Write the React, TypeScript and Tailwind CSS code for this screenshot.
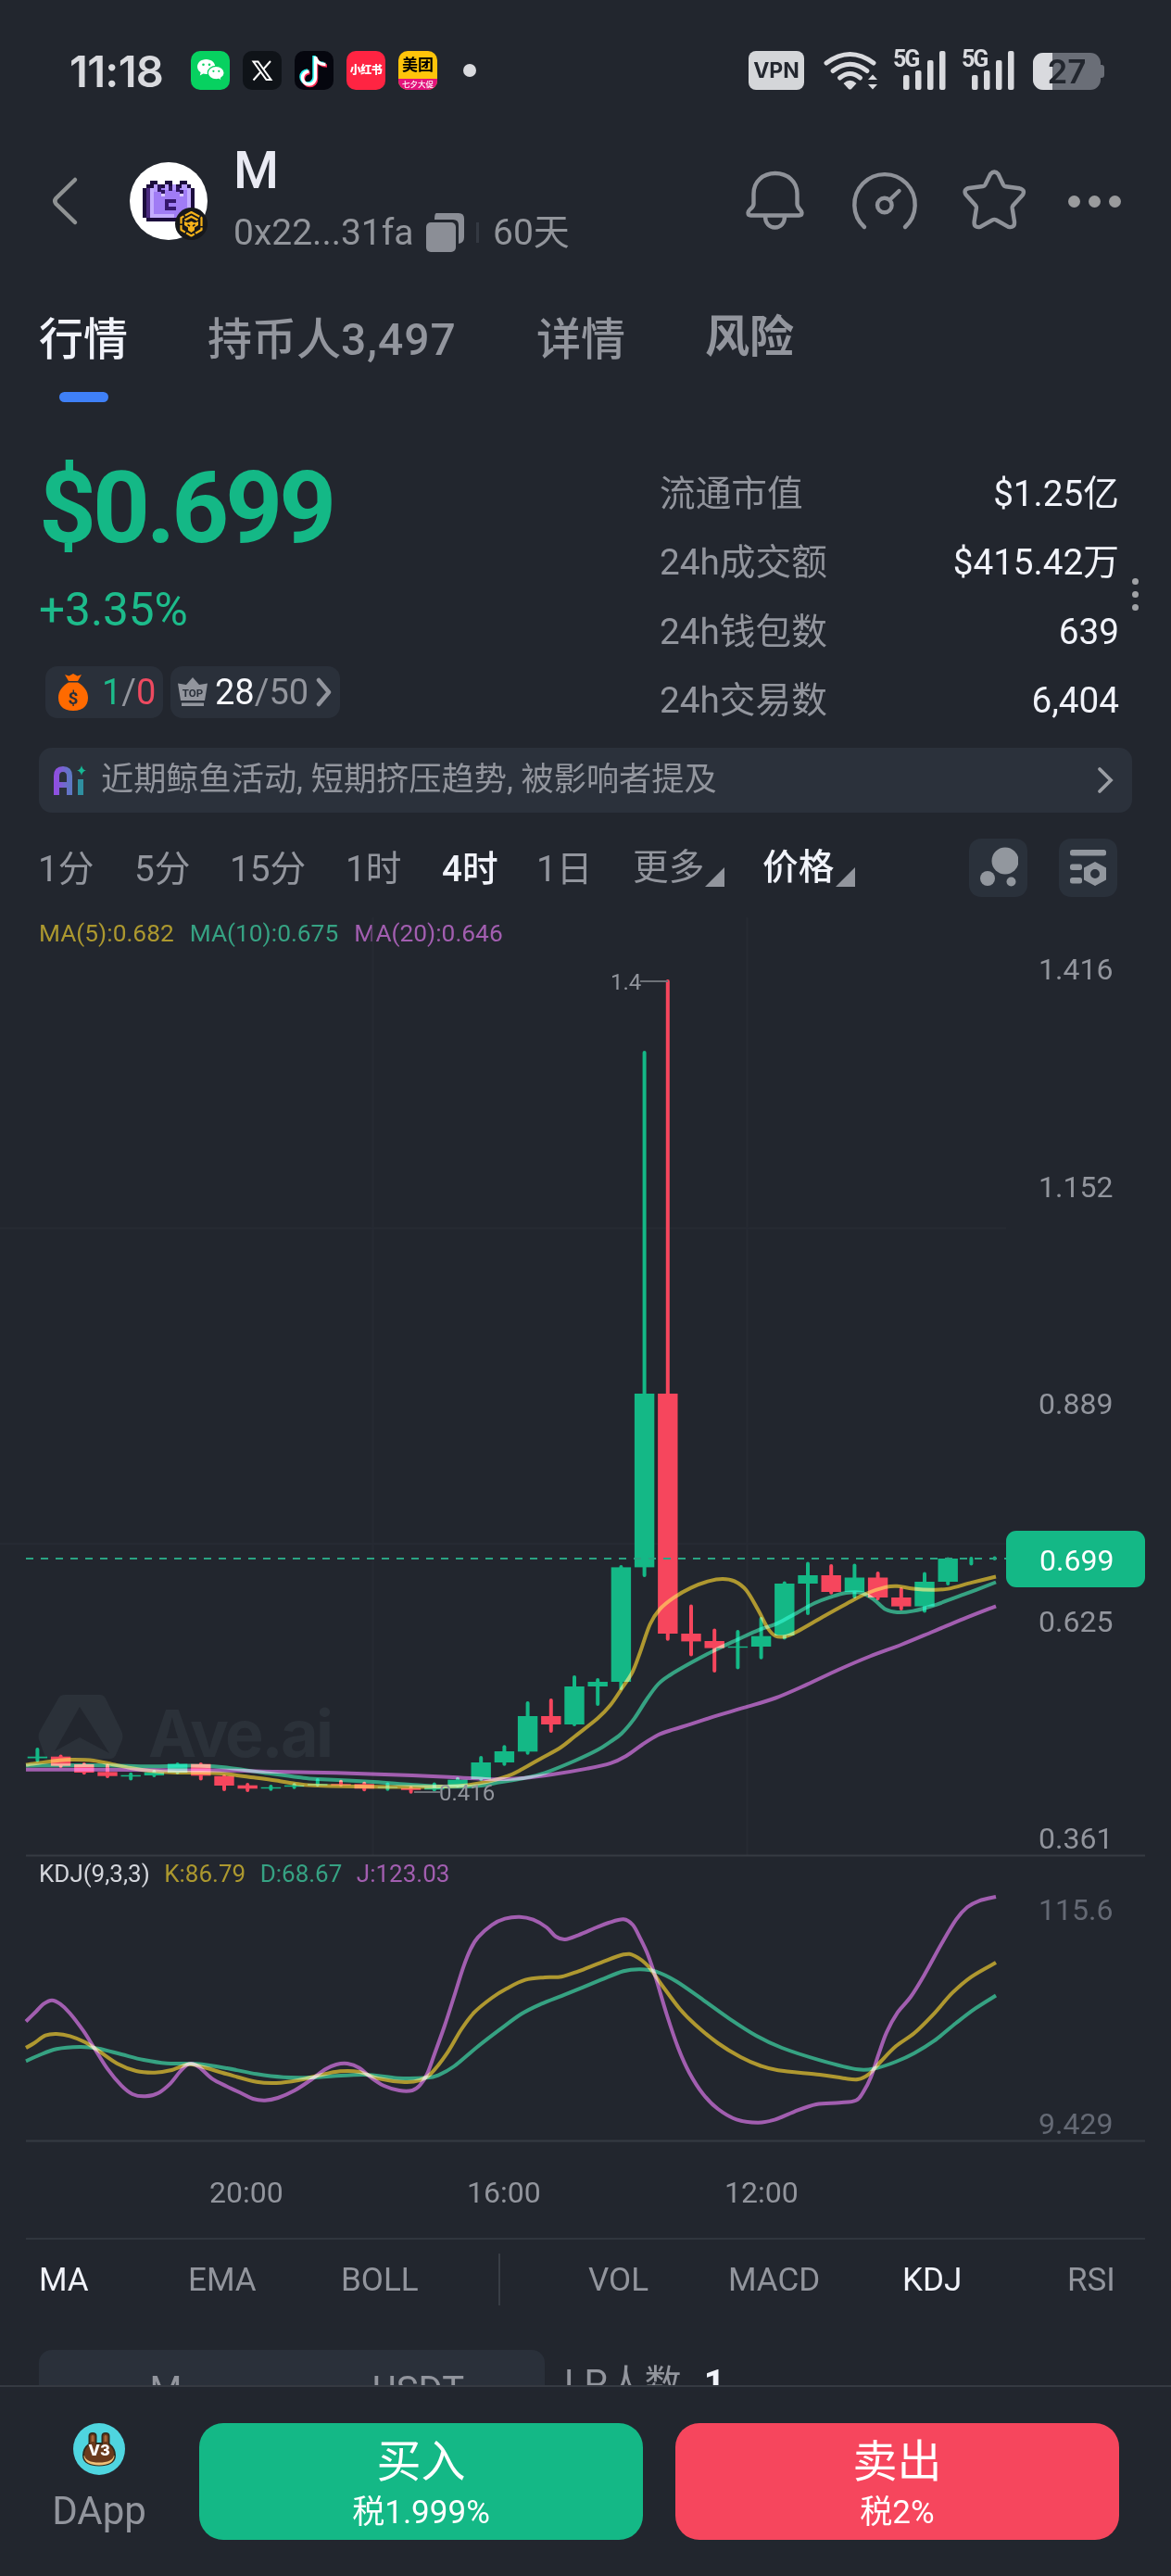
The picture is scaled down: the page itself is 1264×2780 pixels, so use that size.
import clsx from "clsx";

type Point = [number, number];

const UP = "#14b886";
const DOWN = "#f6465d";

// body top, body bottom, wick top, wick bottom, 1 = up / 0 = down
const candles: [number, number, number, number, number][] = [
  [1895.7, 1897.5, 1886, 1901.7, 1],
  [1895.7, 1905.7, 1893.5, 1908, 0],
  [1904, 1913, 1902, 1915.3, 0],
  [1912.3, 1916.7, 1903.5, 1919, 0],
  [1915.7, 1917.2, 1912.7, 1921.5, 1],
  [1912.7, 1916, 1910, 1918, 1],
  [1903.5, 1913, 1902, 1914.7, 1],
  [1903.7, 1916.3, 1902, 1921.5, 0],
  [1916.7, 1927, 1915, 1933, 0],
  [1926.7, 1930.3, 1924, 1934, 0],
  [1928.8, 1930.2, 1926, 1932.7, 1],
  [1926.7, 1928.2, 1924.3, 1930.7, 1],
  [1925.3, 1926.7, 1919, 1928, 1],
  [1925.3, 1926.7, 1920.7, 1928, 0],
  [1925.3, 1930.3, 1922.7, 1933.3, 0],
  [1928.5, 1929.5, 1923.5, 1932.7, 1],
  [1929.8, 1931.7, 1927.5, 1935.7, 0],
  [1929.3, 1931.3, 1923.5, 1933.5, 1],
  [1920.7, 1928, 1917.7, 1929, 1],
  [1902, 1920, 1895, 1922, 1],
  [1890, 1902, 1883.3, 1905.7, 1],
  [1852, 1890.3, 1836, 1893.7, 1],
  [1852, 1861, 1833, 1870, 0],
  [1820, 1861, 1808, 1863, 1],
  [1815, 1820, 1811, 1841, 1],
  [1691.4, 1815, 1689, 1824, 1],
  [1504, 1691.4, 1134, 1702, 1],
  [1504, 1763, 1057, 1770.7, 0],
  [1763, 1771.4, 1731.4, 1787.5, 0],
  [1771, 1778.6, 1757.5, 1805, 0],
  [1776.8, 1778.2, 1759, 1801.4, 1],
  [1765.7, 1777, 1745, 1790.7, 1],
  [1709, 1765, 1706.4, 1769.6, 1],
  [1700, 1709, 1685.4, 1743, 1],
  [1700, 1718, 1688, 1720.7, 0],
  [1702.5, 1718, 1687.5, 1725, 1],
  [1702.5, 1724, 1696, 1727, 0],
  [1724, 1733.6, 1713, 1738, 0],
  [1707, 1733.6, 1696.4, 1740.4, 1],
  [1682, 1707, 1680.4, 1711, 1],
  [0, 0, 1680, 1689.6, 1],
  [0, 0, 1679.5, 1684, 1],
];

const ma5: Point[] = [
  [28, 1904.5], [64, 1899.7], [80, 1899], [101, 1900], [121, 1904], [141, 1908], [161, 1911], [191, 1913],
  [218, 1913], [242, 1914.3], [274, 1918.3], [298, 1921.5], [322, 1925.3], [343, 1927], [403, 1928.3],
  [468, 1928.3], [500, 1927], [524, 1923.3], [548, 1916.7], [564, 1909], [584, 1897.7], [605, 1886],
  [621, 1873.5], [645, 1854.6], [659, 1840], [671, 1822.5], [682.6, 1804.6], [691, 1783], [701.6, 1753],
  [712, 1736.8], [727, 1724.3], [745.7, 1713.6], [765, 1706.4], [780, 1704], [792.7, 1706.4],
  [805.4, 1716], [818, 1736.8], [828.7, 1757], [837, 1765.5], [847.8, 1766], [860.5, 1760.7], [888, 1745],
  [913.4, 1731], [934.6, 1720], [955.8, 1712.9], [968.5, 1711.8], [985.4, 1714.5], [1006.6, 1715.7],
  [1023.5, 1714.6], [1049, 1707.9], [1075, 1701.5],
];

const ma10: Point[] = [
  [28, 1905.5], [100, 1905], [161, 1906.3], [191, 1905.7], [218, 1905.7], [242, 1907.3], [282, 1912.7],
  [322, 1918], [343, 1920], [403, 1923], [443, 1926], [484, 1928.3], [516, 1927.3], [540, 1923.3],
  [564, 1919.3], [588, 1913.3], [621, 1900], [645, 1888.6], [659, 1879.6], [671, 1870.7], [684.7, 1854.6],
  [697.4, 1835], [710, 1818], [722.8, 1808], [745.7, 1794.6], [769.4, 1782], [794.8, 1770], [820, 1758.6],
  [837, 1752.9], [854, 1744], [879.5, 1730], [896.5, 1723.6], [913.4, 1719], [930, 1719], [943, 1726],
  [955.8, 1736.8], [968.5, 1740], [985.4, 1738.6], [1006.6, 1733], [1040.5, 1720.7], [1075, 1707.5],
];

const ma20: Point[] = [
  [28, 1909.7], [100, 1909.7], [191, 1910.5], [250, 1910.7], [298, 1912], [363, 1913.3], [423, 1915.3],
  [484, 1917.7], [524, 1920], [544, 1920], [564, 1919], [596, 1915], [634, 1908.6], [659, 1902.9],
  [676, 1895], [693, 1883], [710, 1872.5], [727, 1866.4], [745.7, 1860.7], [769.4, 1852.9], [803, 1842.9],
  [837, 1832.5], [871, 1817.9], [905, 1802], [939, 1787.5], [972.7, 1775], [1006.6, 1761],
  [1040.5, 1746.8], [1075, 1733.3],
];

const kLine: Point[] = [
  [28, 2210], [36.7, 2205], [49, 2196.7], [61, 2195], [75.5, 2197.3], [92, 2204], [106, 2213], [126.5, 2227],
  [147, 2235], [167, 2236.7], [184, 2234.3], [204, 2227.7], [220, 2231], [245, 2238.3], [277, 2246.7],
  [298, 2248], [322, 2245], [343, 2240], [367, 2235.3], [388, 2236], [408, 2243], [437, 2247],
  [453, 2245], [465, 2238], [482, 2216.7], [498, 2190], [512, 2171.7], [531, 2156], [547, 2146],
  [567, 2136.7], [588, 2134], [606, 2133.3], [624.5, 2127.3], [648.5, 2118], [673, 2109.3], [685, 2110.7],
  [699.5, 2121.7], [714, 2141.7], [734, 2168.3], [750.5, 2185], [775, 2205], [799.5, 2220], [820, 2229],
  [840, 2234.3], [885, 2239], [910, 2242.7], [926, 2244], [938, 2238.3], [950.5, 2225], [967, 2208.3],
  [987, 2194], [1008, 2173.3], [1028, 2150.7], [1048.5, 2133.3], [1075, 2118],
];

const dLine: Point[] = [
  [28, 2224.3], [41, 2218.5], [61, 2211.3], [86, 2209], [106, 2210.7], [131, 2217], [155, 2223],
  [180, 2226.7], [212, 2227.3], [245, 2232], [277, 2238.3], [306, 2241.7], [335, 2242], [392, 2239],
  [429, 2242.7], [461, 2242.3], [473.5, 2239.3], [490, 2230], [514, 2210], [539, 2190.7], [563, 2173.3],
  [584, 2162.7], [612, 2151.7], [648.5, 2136.7], [673, 2127.3], [691, 2125.3], [708, 2127.7],
  [730, 2138.3], [759, 2158.3], [787, 2178.3], [816, 2196.7], [844, 2210], [885, 2223.3], [926, 2233.3],
  [946.5, 2231.7], [967, 2225], [987, 2215.7], [1008, 2202.7], [1032, 2183.3], [1052.6, 2167.7],
  [1075, 2153.5],
];

const jLine: Point[] = [
  [28, 2181.5], [39, 2170.7], [47, 2162.7], [56, 2158.7], [65, 2162.7], [75.5, 2172.7], [90, 2191.7],
  [102, 2210.7], [116, 2232.7], [131, 2250.7], [143, 2260], [157, 2262.3], [171, 2258.7], [184, 2248.3],
  [194, 2236], [202, 2228.3], [208, 2227.3], [216, 2231.7], [229, 2243.3], [245, 2251.7], [261, 2259.3],
  [273, 2265], [286, 2266.7], [300, 2264], [318, 2256], [335, 2245], [351, 2233.3], [363, 2228],
  [375, 2227], [388, 2231.7], [400, 2241.7], [414, 2250.7], [431, 2256], [445, 2256], [453, 2250.7],
  [461, 2238.3], [469, 2216.7], [480, 2186], [490, 2155], [500, 2123.3], [508, 2103.3], [516, 2090.7],
  [531, 2077.3], [545, 2070.7], [561, 2068.7], [575.5, 2071.7], [590, 2080], [600, 2090], [610, 2093],
  [624.5, 2088.3], [644, 2080], [657, 2075], [673, 2071.3], [683, 2077.3], [691, 2091.7], [699.5, 2110],
  [708, 2135], [720, 2175], [732, 2210], [744, 2236.7], [759, 2260], [775, 2276], [795, 2287.3],
  [818, 2290.7], [836, 2287.7], [857, 2279], [881, 2271], [906, 2269.3], [924, 2266.7], [932, 2257.3],
  [940, 2241.7], [948.5, 2216.7], [957, 2193.3], [969, 2171.7], [983, 2155], [997.5, 2131.7],
  [1016, 2098.3], [1032, 2071.7], [1044, 2058.3], [1057, 2051.3], [1075, 2047],
];

const smooth = (pts: Point[]) => {
  let d = `M${pts[0][0]} ${pts[0][1]}`;
  for (let i = 0; i < pts.length - 1; i++) {
    const p0 = pts[i - 1] ?? pts[i];
    const p1 = pts[i];
    const p2 = pts[i + 1];
    const p3 = pts[i + 2] ?? p2;
    d += `C${p1[0] + (p2[0] - p0[0]) / 6} ${p1[1] + (p2[1] - p0[1]) / 6} ${p2[0] - (p3[0] - p1[0]) / 6} ${p2[1] - (p3[1] - p1[1]) / 6} ${p2[0]} ${p2[1]}`;
  }
  return d;
};

const Line = ({ pts, color }: { pts: Point[]; color: string }) => (
  <path d={smooth(pts)} stroke={color} strokeWidth={4} fill="none" className="mix-blend-screen" />
);

export default function App() {
  return (
    <div className="flex h-[2780px] w-[1264px] flex-col overflow-hidden bg-[#22262e] font-['Roboto','Noto_Sans_CJK_SC',sans-serif] text-[#92959d]">
      <StatusBar />
      <Header />
      <Tabs />
      <PriceSection />
      <AiBanner />
      <Timeframes />
      <Chart />
      <Indicators />
      <PairPeek />
      <BottomBar />
    </div>
  );
}

const Signal = () => (
  <div className="relative h-[44px] w-[58px]">
    <svg width="58" height="44" viewBox="0 0 58 44" fill="#d9dade">
      <rect x="11" y="27" width="6.5" height="16" rx="2" />
      <rect x="24" y="22" width="6.5" height="21" rx="2" />
      <rect x="37" y="11" width="6.5" height="32" rx="2" />
      <rect x="50" y="1" width="6.5" height="42" rx="2" />
    </svg>
    <span className="absolute -top-[5px] left-0 text-[25px] font-bold leading-[30px] tracking-[-2px]">5G</span>
  </div>
);

const StatusBar = () => (
  <div className="flex h-[152px] shrink-0 items-center pl-[75px] text-[#d9dade]">
    <span className="w-[131px] font-['Inter'] text-[47px] font-semibold leading-none tracking-[-0.7px]">
      11:18
    </span>
    <div className="flex gap-[14px]">
      {/* WeChat */}
      <svg width="42" height="42" viewBox="0 0 42 42">
        <rect width="42" height="42" rx="10" fill="#07d160" />
        <path d="M16.5 9C11 9 7 12.6 7 17c0 2.600 1.400 4.700 3.600 6.100l-.8 3.300 3.500-1.900c1 .3 2.100.4 3.200.4 5.500 0 9.800-3.500 9.800-7.900S22 9 16.500 9z" fill="#fff" />
        <path d="M27.300 16.300c-5 0-9 3.300-9 7.300s4 7.200 9 7.200c1 0 2-.1 2.900-.4l3 1.800-.7-2.900c2.300-1.400 3.600-3.400 3.600-5.700 0-4-4-7.300-8.800-7.300z" fill="#fff" stroke="#07d160" strokeWidth="1.200" />
        <g fill="#07d160">
          <circle cx="13.500" cy="14.800" r="1.300" />
          <circle cx="20" cy="14.800" r="1.300" />
          <circle cx="24.400" cy="21.800" r="1.100" />
          <circle cx="30.300" cy="21.800" r="1.100" />
        </g>
      </svg>
      {/* X */}
      <svg width="42" height="42" viewBox="0 0 42 42">
        <rect width="42" height="42" rx="10" fill="#0f1318" />
        <path d="M11.500 11.500h5l14 19.500h-5z" fill="none" stroke="#fff" strokeWidth="2" />
        <path d="M30 11 22 20M19 23l-7.500 8.500" stroke="#fff" strokeWidth="2" />
      </svg>
      {/* Douyin */}
      <svg width="42" height="42" viewBox="0 0 42 42" fill="none" strokeWidth="3.500">
        <rect width="42" height="42" rx="10" fill="#05060e" />
        <path d="M22 5.500v23a7 7 0 1 1-7-7M22 6c1 5.500 5 8 10.500 8" transform="translate(-1 -.5)" stroke="#25f4ee" />
        <path d="M22 6.500v23a7 7 0 1 1-7-7M22 7c1 5.500 6 8 11.500 8" transform="translate(1.500 1)" stroke="#fe2c55" />
        <path d="M22.500 6v23a7 7 0 1 1-7-7M22.500 6.500c1 5.500 5 8 11 8" stroke="#fff" />
      </svg>
      <div className="flex h-[42px] w-[42px] items-center justify-center whitespace-nowrap rounded-[10px] bg-[#ff2442] text-[12px] font-black leading-none tracking-[-0.500px] text-white">
        小红书
      </div>
      <div className="flex h-[42px] w-[42px] flex-col items-center overflow-hidden whitespace-nowrap rounded-[10px] bg-[#ffc40a]">
        <span className="flex h-[30px] items-center text-[17px] font-bold leading-none text-black">美团</span>
        <span className="flex h-[12px] w-full items-center justify-center bg-[#e3137c] text-[8.500px] font-medium leading-none text-white">
          七夕大促
        </span>
      </div>
    </div>
    <div className="ml-[28px] h-[14px] w-[14px] rounded-full bg-[#d9dade]" />
    <div className="ml-[294px] flex h-[42px] w-[60px] items-center justify-center rounded-[8px] bg-[#d4d6d9] font-['Inter'] text-[23px] font-bold leading-none text-[#22262e]">
      VPN
    </div>
    <svg className="ml-[20px]" width="64" height="44" viewBox="888 54 64 44" fill="none">
      <g stroke="#d9dade" strokeWidth="5" strokeLinecap="round">
        <path d="M892 68q25.500-19 51 0" />
        <path d="M899 76.500q18.500-14.500 37 0" />
        <path d="M906.500 84q11-9 22 0" />
      </g>
      <path d="M910.500 90q7-6.500 14 0l-5.500 6q-1.500 1.200-3 0zM937 86l5-5.500 5 5.500zM937 91h10l-5 5.500z" fill="#d9dade" />
    </svg>
    <div className="ml-[12px] flex gap-[16px]">
      <Signal />
      <Signal />
    </div>
    <div className="relative ml-[19px] mt-[2px] flex h-[40px] w-[73px] items-center justify-center overflow-hidden rounded-[11px] bg-[#6a6e77]">
      <div className="absolute inset-y-0 left-0 w-[21px] bg-[#d9dade]" />
      <span className="relative font-['Inter'] text-[35px] font-semibold leading-none text-[#22262e]">27</span>
    </div>
    <div className="mt-[2px] h-[14px] w-[4px] rounded-r-[3px] bg-[#6a6e77]" />
  </div>
);

const Avatar = () => (
  <svg width="84" height="84" viewBox="0 0 84 84">
    <circle cx="42" cy="42" r="42" fill="#fff" />
    <g shapeRendering="crispEdges">
      <path d="M14 28h4v-4h4v-4h8v4h8v-4h8v4h8v-4h8v4h4v4h4v32h-4v4H18v-4h-4z" fill="#1c0d3d" />
      <path d="M18 28h4v32h-4z" fill="#4a2a80" />
      <path d="M22 28h44v32H22z" fill="#a07cf5" />
      <path d="M22 28h4v28h22v4H22zM62 28h4v24h-4z" fill="#c3acff" />
      <path d="M26 24h4v8h-4zM38 24h4v6h-4zM46 24h4v6h-4zM56 24h6v6h-6z" fill="#b69aff" />
      <path d="M30 24h4v8h-4zM34 30h4v4h-4zM42 26h4v5h-4zM50 26h4v6h-4zM54 30h4v4h-4z" fill="#2c145c" />
      <path d="M34 34h4v3h-4zM54 34h4v3h-4z" fill="#d9cbff" />
      <path d="M38 40h12v4h-8v4h8v4H38z" fill="#35176e" />
    </g>
    <circle cx="66.500" cy="66.500" r="17.500" fill="#17181b" />
    <g fill="none" stroke="#f5b21a" strokeWidth="2.200" strokeLinejoin="round">
      <path d="M66.500 54 77.500 60v13l-11 6.500-11-6.500V60z" strokeDasharray="10 1.500" />
      <path d="m59.500 62.500 7-3.800 7 3.800" />
    </g>
    <path d="m59 64 4 1.500 3.500-1.700L70 65.500l4-1.500v4l-4 2.500v3L66.500 76 63 73.500v-3L59 68z" fill="#f5b21a" />
    <path d="m62.500 67.500 2.500 1.500M70.500 67.500 68 69" stroke="#17181b" strokeWidth="1.500" />
  </svg>
);

const Header = () => (
  <div className="flex h-[130px] shrink-0 items-center pl-[54px] text-[#92959b]">
    <svg width="32" height="56" viewBox="0 0 32 56" fill="none">
      <path d="M27 5 6.500 25q-2.500 3 0 6L27 51" stroke="#8f9293" strokeWidth="4.500" strokeLinecap="round" />
    </svg>
    <div className="ml-[54px]">
      <Avatar />
    </div>
    <div className="ml-[28px] flex w-[552px] flex-col">
      <div className="flex h-[68px] items-center pt-[2px] text-[56px] font-medium leading-none text-[#e9eaf3]">M</div>
      <div className="flex h-[68px] items-center text-[39px] leading-none">
        <span className="w-[206px]">0x22...31fa</span>
        <svg width="44" height="44" viewBox="0 0 44 44">
          <path d="M13 1h24q6 0 6 6v20q0 6-6 7V14q0-6-6-6H11q0-7 2-7z" fill="#8b8e96" />
          <rect x="2" y="11" width="32" height="32" rx="5" fill="#8b8e96" />
        </svg>
        <div className="ml-[12px] h-[22px] w-[3px] bg-[#343942]" />
        <span className="ml-[15px]">60天</span>
      </div>
    </div>
    <svg width="66" height="68" viewBox="803 184 66 68" fill="none" stroke="#8f9299" strokeWidth="4.400">
      <path d="M806.500 230.500q0 3 3 3h52q3 0 3-3 0-1.500-2-3.500-3-3-3-6V210c0-13-10.500-22-23.700-22S812.500 197 812.500 210v11q0 3-4 6-2 2-2 3.500zM825 234.500c0 7 4 12 10.500 12s10.500-5 10.500-12" />
    </svg>
    <svg className="ml-[48px]" width="74" height="68" viewBox="917 184 74 68" fill="none" stroke="#8f9299" strokeWidth="4.400" strokeLinecap="round">
      <path d="M932 246a32.700 32.700 0 1 1 44 0M959.500 216.500l10-9.500" />
      <circle cx="953.800" cy="222.500" r="7.800" />
    </svg>
    <svg className="ml-[46px]" width="70" height="68" viewBox="1037 184 70 68" fill="none" stroke="#8f9299" strokeWidth="4.400" strokeLinejoin="round">
      <path d="M1068 189q4.300-5 8.600 0l5.400 11.500q.8 1.500 2.500 1.800l15 2q6.500 1.500 3.500 7l-10.500 11.500q-1 1.500-.8 3l2.300 14.500q.5 7-6.500 5.500l-13-7.300q-2.200-1.200-4.400 0l-13 7.300q-7 1.500-6.500-5.500l2.300-14.500q.2-1.500-.8-3L1041.500 211q-3-5.500 3.500-7l15-2q1.700-.3 2.500-1.800z" />
    </svg>
    <div className="ml-[45px] flex gap-[9px]">
      <i className="h-[13px] w-[13px] rounded-full bg-[#9a9b9d]" />
      <i className="h-[13px] w-[13px] rounded-full bg-[#9a9b9d]" />
      <i className="h-[13px] w-[13px] rounded-full bg-[#9a9b9d]" />
    </div>
  </div>
);

const Tabs = () => (
  <div className="flex h-[166px] shrink-0 items-center pl-[42px] pt-[4px] text-[48px] leading-none">
    <div className="relative w-[182px] font-medium text-[#f1f3fa]">
      行情
      <div className="absolute left-[22px] top-[80px] h-[11px] w-[53px] rounded-full bg-[#3f80f7]" />
    </div>
    <div className="w-[355px] font-medium">
      持币人<span className="tracking-[1px]">3,497</span>
    </div>
    <div className="w-[182px] font-medium">详情</div>
    <div className="-mt-[6px] font-bold">风险</div>
  </div>
);

const stats = [
  ["流通市值", "$1.25亿"],
  ["24h成交额", "$415.42万"],
  ["24h钱包数", "639"],
  ["24h交易数", "6,404"],
];

const PriceSection = () => (
  <div className="relative flex h-[359px] shrink-0 justify-between pl-[42px] pr-[56px] pt-[47px] leading-none">
    <div>
      <div className="flex h-[103px] items-center pt-[3px] text-[108px] font-bold tracking-[-4px] text-[#14b886]">
        $0.699
      </div>
      <div className="flex h-[121px] items-center text-[49.500px] text-[#1dbb8b]">+3.35%</div>
      <div className="flex gap-[8px] pl-[7px] text-[38px]">
        <div className="flex h-[56px] w-[127px] items-center rounded-[13px] bg-[#2a303a] pl-[14px]">
          <svg width="32" height="42" viewBox="0 0 32 42">
            <path d="m7 2 4.500 1.500L16 1l4.500 2.500L25 2l-4 7H11zM11 10.500h10C28 14.500 32 20 32 27c0 9-6 14-16 14S0 36 0 27c0-7 4-12.500 11-16.500z" fill="#ff6a00" />
            <text x="16" y="34" fontSize="19" fontWeight="700" textAnchor="middle" fill="#2a303a">$</text>
          </svg>
          <span className="ml-[15px]">
            <span className="text-[#1dbb8b]">1</span>/<span className="text-[#ee4a60]">0</span>
          </span>
        </div>
        <div className="flex h-[56px] w-[183px] items-center rounded-[13px] bg-[#2a303a] pl-[8px]">
          <svg width="32" height="32" viewBox="0 0 32 32" fill="#92959d">
            <path d="M0 6.500 9 8l7-8 7 8 9-1.500L29 25H3zM4 27.500h24V31H4z" />
            <text x="16" y="20.500" fontSize="11.500" fontWeight="700" textAnchor="middle" fill="#2a303a">TOP</text>
          </svg>
          <span className="ml-[8px]">
            <span className="text-[#f7f8fc]">28</span>/50
          </span>
          <svg className="ml-[8px]" width="18" height="32" viewBox="0 0 18 32" fill="none">
            <path d="m3 3 11 13L3 29" stroke="#92959d" strokeWidth="4.500" strokeLinecap="round" strokeLinejoin="round" />
          </svg>
        </div>
      </div>
    </div>
    <div className="w-[496px] pt-px text-[38.700px]">
      {stats.map(([label, value]) => (
        <div key={label} className="flex h-[74.400px] items-center justify-between">
          <span>{label}</span>
          <span className="text-[#f1f3fa]">{value}</span>
        </div>
      ))}
    </div>
    <div className="absolute right-[35px] top-[176px] flex flex-col gap-[7px]">
      <i className="h-[7px] w-[7px] rounded-full bg-[#a0a2a6]" />
      <i className="h-[7px] w-[7px] rounded-full bg-[#a0a2a6]" />
      <i className="h-[7px] w-[7px] rounded-full bg-[#a0a2a6]" />
    </div>
  </div>
);

const AiBanner = () => (
  <div className="mx-[42px] flex h-[70px] shrink-0 items-center rounded-[14px] bg-[#2b313b] pl-[16px] pr-[18px] text-[35.200px] leading-none">
    <svg width="36" height="32" viewBox="0 0 36 32" fill="none">
      <defs>
        <linearGradient id="ai" x1="0" x2="1">
          <stop offset="0" stopColor="#8f4fe0" />
          <stop offset="1" stopColor="#5f78c4" />
        </linearGradient>
      </defs>
      <path d="M3 32V11.500Q3 4 10 4t7 7.500V32M3 21h14" stroke="url(#ai)" strokeWidth="6" />
      <path d="M26 15h6v17h-6z" fill="#2f8fa0" />
      <path d="M30 0q1 5 5 5.500-4 .5-5 5.500-1-5-5-5.500 4-.5 5-5.500z" fill="#16b894" />
    </svg>
    <span className="ml-[15px] flex-1 whitespace-pre">近期鲸鱼活动, 短期挤压趋势, 被影响者提及</span>
    <svg width="22" height="32" viewBox="0 0 22 32" fill="none">
      <path d="m5 4 12 12L5 28" stroke="#9b9ea4" strokeWidth="3.800" strokeLinecap="round" />
    </svg>
  </div>
);

const Timeframes = () => (
  <div className="flex h-[113px] shrink-0 items-center pl-[41px] pt-[9px] text-[38.700px] leading-none">
    <span className="w-[104px]">1分</span>
    <span className="w-[103px]">5分</span>
    <span className="w-[125px]">15分</span>
    <span className="w-[104px]">1时</span>
    <span className="w-[102px] font-medium text-[#f1f3fa]">4时</span>
    <span className="w-[104px]">1日</span>
    <span className="-mt-[4px] w-[78px]">更多</span>
    <Corner />
    <span className="-mt-[4px] ml-[41px] w-[79px] font-medium text-[#f1f3fa]">价格</span>
    <Corner />
    <div className="-mt-[4px] ml-[123px] flex h-[63px] w-[63px] items-center justify-center rounded-[13px] bg-[#2a313b]">
      <svg width="42" height="44" viewBox="0 0 42 44" fill="#92979e">
        <circle cx="28" cy="15" r="14.500" />
        <circle cx="9" cy="34" r="8" />
        <circle cx="34.500" cy="37.500" r="5" />
      </svg>
    </div>
    <div className="-mt-[4px] ml-[34px] flex h-[63px] w-[63px] items-center justify-center rounded-[13px] bg-[#2a313b]">
      <svg width="40" height="40" viewBox="0 0 40 40" fill="#92979e">
        <rect y="1" width="39" height="6.500" rx="2.500" />
        <rect y="16.500" width="13" height="6.500" rx="2.500" />
        <rect y="31" width="13" height="6.500" rx="2.500" />
        <path d="M27 14 39 20.500v13L27 40l-12-6.500v-13zM27 22a5 5 0 1 0 0 10 5 5 0 0 0 0-10z" fillRule="evenodd" />
      </svg>
    </div>
  </div>
);

const Corner = () => (
  <svg className="mt-[17px] shrink-0" width="21" height="21" viewBox="0 0 21 21">
    <path d="M21 0v21H0z" fill="#92959d" />
  </svg>
);

const priceTicks: [string, number][] = [
  ["1.416", 1045],
  ["1.152", 1280],
  ["0.889", 1514],
  ["0.625", 1749],
  ["0.361", 1983],
];

const Chart = () => (
  <>
    <div className="flex h-[34px] shrink-0 items-center gap-[17px] pl-[42px] text-[26.300px] leading-none">
      <span className="text-[#ac982f]">MA(5):0.682</span>
      <span className="text-[#36a283]">MA(10):0.675</span>
      <span className="text-[#a25eb0]">MA(20):0.646</span>
    </div>
    <svg className="block shrink-0 overflow-visible" width="1264" height="978" viewBox="0 1024 1264 978">
      <path d="M402.500 990v1012M806.500 990v1012M0 1325.500h1086M0 1666h1086" stroke="#262a33" strokeWidth="2" />
      {/* watermark */}
      <g fill="#2b3139">
        <path d="M70 1829h38q4 0 6 4l17 35q3 6 0 12l-6 14q-2 4-6 4H54q-4 0-6-4l-5-14q-3-6 0-12l20-35q2-4 7-4z" />
        <path d="m86 1842 32 50-32-17-27 15z" fill="#22262e" />
        <text x="160" y="1896" fontSize="70" fontWeight="700" className="font-['Inter']" textLength="200">
          Ave.ai
        </text>
      </g>
      <g>
        {candles.map(([top, bottom, high, low, up], i) => {
          const x = 40.4 + i * 25.2;
          return (
            <g key={i} fill={up ? UP : DOWN}>
              <rect x={x - 2} y={high} width="4" height={low - high} rx="2" />
              {bottom > 0 && <rect x={x - 10.7} y={top} width="21.400" height={bottom - top} />}
            </g>
          );
        })}
      </g>
      <path d="M28 1682H1086" stroke="#2aa483" strokeWidth="2" strokeDasharray="8 8" />
      <Line pts={ma5} color="#a38602" />
      <Line pts={ma10} color="#179267" />
      <Line pts={ma20} color="#94429f" />
      <path d="M691 1059h30M447 1934h28" stroke="#6d7178" strokeWidth="2" />
      <g fill="#92959d" fontSize="24">
        <text x="659" y="1068">1.4</text>
        <text x="474" y="1943">0.416</text>
      </g>
      <g fill="#92959d" fontSize="32">
        {priceTicks.map(([label, y]) => (
          <text key={label} x="1121" y={y + 11.5}>{label}</text>
        ))}
      </g>
      <rect x="1086" y="1652" width="150" height="61" rx="11" fill={UP} />
      <text x="1122" y="1695" fontSize="32" fill="#fff">0.699</text>
      <path d="M28 2002.500h1208" stroke="#363b43" strokeWidth="2" />
    </svg>
    <div className="flex h-[40px] shrink-0 items-center gap-[15.500px] pl-[42px] text-[26px] leading-none">
      <span className="text-[#d4d6dc]">KDJ(9,3,3)</span>
      <span className="text-[#ac982f]">K:86.79</span>
      <span className="text-[#36a283]">D:68.67</span>
      <span className="text-[#a25eb0]">J:123.03</span>
    </div>
    <svg className="block shrink-0 overflow-visible" width="1264" height="268" viewBox="0 2042 1264 268">
      <Line pts={kLine} color="#a38602" />
      <Line pts={dLine} color="#179267" />
      <Line pts={jLine} color="#94429f" />
      <g fill="#646974" fontSize="32">
        <text x="1121" y="2072">115.6</text>
        <text x="1121" y="2302.500">9.429</text>
      </g>
      <path d="M28 2310.500h1208" stroke="#363b43" strokeWidth="2" />
    </svg>
    <div className="mx-[28px] flex h-[107px] shrink-0 items-center border-b-2 border-[#30353d] pl-[198px] pt-[6px] text-[32px] leading-none">
      <span className="w-[278px]">20:00</span>
      <span className="w-[278px]">16:00</span>
      <span>12:00</span>
    </div>
  </>
);

const indicators = [
  { name: "MA", width: "w-[161px]", active: true },
  { name: "EMA", width: "w-[165px]" },
  { name: "BOLL", width: "w-[170px]" },
  { name: "VOL", width: "w-[151px]" },
  { name: "MACD", width: "w-[188px]" },
  { name: "KDJ", width: "w-[178px]", active: true },
  { name: "RSI", width: "w-[60px]" },
];

const Indicators = () => (
  <div className="flex h-[119px] shrink-0 pl-[42px] pt-[14px] text-[35px] leading-none">
    {indicators.map(({ name, width, active }) => (
      <div key={name} className="flex h-[57px] items-center pt-px">
        {name === "VOL" && <div className="mr-[95px] h-[56px] w-[2px] bg-[#383d45]" />}
        <span className={clsx(width, active && "text-[#f1f3fa]")}>{name}</span>
      </div>
    ))}
  </div>
);

const PairPeek = () => (
  <div className="flex h-[38px] shrink-0 overflow-hidden pl-[42px] leading-none">
    <div className="flex h-[88px] w-[546px] items-center rounded-[14px] bg-[#2a303a] text-[40px]">
      <span className="w-1/2 pl-px text-center">M</span>
      <span className="w-1/2 text-center">USDT</span>
    </div>
    <span className="ml-[21px] pt-[17px] text-[40px]">LP人数</span>
    <span className="ml-[24px] pt-[17px] text-[40px] font-bold text-[#f1f3fa]">1</span>
  </div>
);

const BottomBar = () => (
  <div className="flex h-[206px] shrink-0 border-t-2 border-[#353a42] pt-[39px] leading-none">
    <div className="flex w-[214px] flex-col items-center">
      <svg width="56" height="56" viewBox="0 0 56 56">
        <circle cx="28" cy="28" r="28" fill="#4fd5df" />
        <path d="M16.500 14q0-4 4.500-4t4.500 4v7h5v-7q0-4 4.500-4t4.500 4v8q6.500 5 6.500 13C46 43 38 46.500 28 46.500S10 43 10 35q0-8 6.500-13z" fill="#2f2a1c" />
        <path d="M11.500 35c0 7 7 10.500 16.500 10.500S44.500 42 44.500 35z" fill="#f0c078" />
        <path d="M18 14.500q0-3 3-3t3 3V23h8v-8.500q0-3 3-3t3 3V23q6 4.500 6 11c0 6-7 8.500-16 8.500S12 40 12 34q0-6.500 6-11z" fill="#6a3a1c" />
        <path d="M19.500 20v-5.500q0-1.500 1.500-1.500t1.500 1.500V20zM33.500 20v-5.500q0-1.500 1.500-1.500t1.500 1.500V20z" fill="#a5673a" />
        <text x="28" y="34.500" fontSize="16.500" fontWeight="800" textAnchor="middle" fill="#fff" className="font-['Inter']">
          V3
        </text>
      </svg>
      <span className="mt-[18px] text-[42px]">DApp</span>
    </div>
    <button className="ml-px flex h-[126px] w-[479px] flex-col items-center rounded-[26px] bg-[#14b886] pt-[18px] text-white">
      <span className="text-[48px]">买入</span>
      <span className="mt-[13px] text-[35px]">税1.999%</span>
    </button>
    <button className="ml-[35px] flex h-[126px] w-[479px] flex-col items-center rounded-[26px] bg-[#f6465d] pt-[18px] text-white">
      <span className="text-[48px]">卖出</span>
      <span className="mt-[13px] text-[35px]">税2%</span>
    </button>
  </div>
);
